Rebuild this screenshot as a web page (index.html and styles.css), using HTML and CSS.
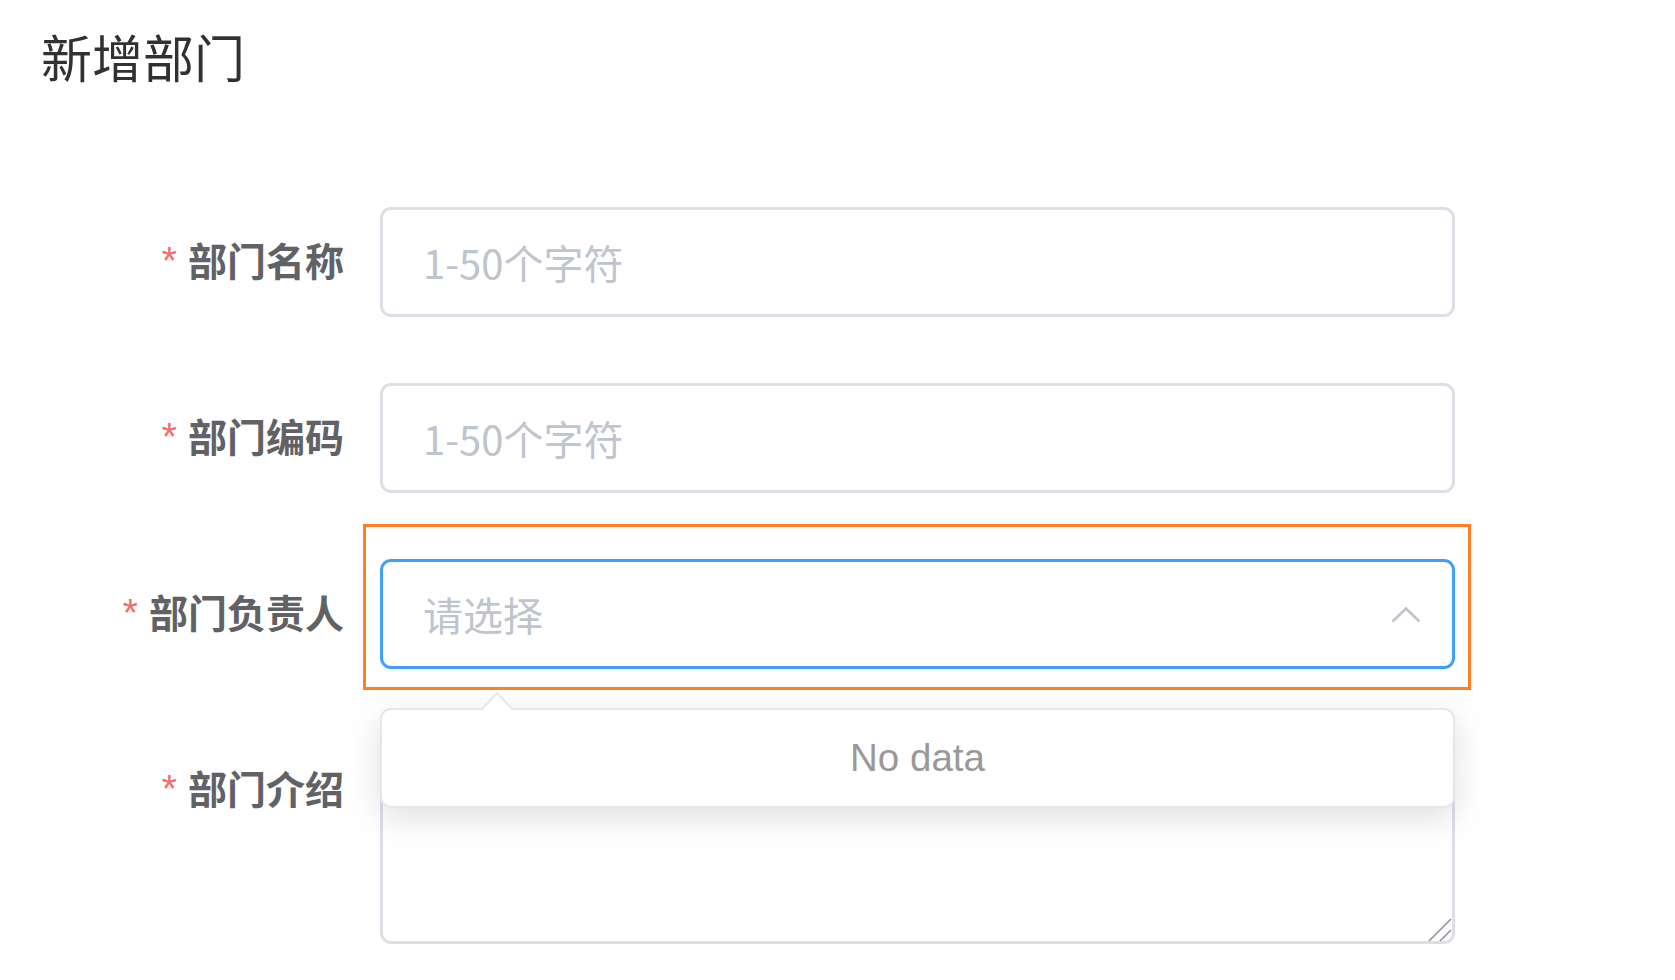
FILE: index.html
```html
<!DOCTYPE html>
<html lang="zh-CN">
<head>
<meta charset="utf-8">
<title>新增部门</title>
<link rel="stylesheet" href="styles.css">
</head>
<body>
<h1 class="title">新增部门</h1>
<form class="form">
  <div class="item">
    <label class="label"><span class="req">*</span>部门名称</label>
    <input class="input" type="text" placeholder="1-50个字符">
  </div>
  <div class="item">
    <label class="label"><span class="req">*</span>部门编码</label>
    <input class="input" type="text" placeholder="1-50个字符">
  </div>
  <div class="item">
    <label class="label"><span class="req">*</span>部门负责人</label>
    <div class="select">
      <input class="input input-focus" type="text" readonly placeholder="请选择">
      <svg class="caret" width="30" height="16" viewBox="0 0 30 16"><polyline points="1.5,14.5 15,1.5 28.5,14.5" fill="none" stroke="#c0c4cc" stroke-width="2.6"/></svg>
      <div class="highlight"></div>
      <div class="dropdown">
        <svg class="dropdown-arrow" width="30" height="22" viewBox="0 0 30 22"><polygon points="0,17 15,1 30,17 30,22 0,22" fill="#fff"/><polyline points="0,17 15,1 30,17" fill="none" stroke="#e4e7ed" stroke-width="2"/></svg>
        <p class="empty">No data</p>
      </div>
    </div>
  </div>
  <div class="item">
    <label class="label"><span class="req">*</span>部门介绍</label>
    <div class="textarea-wrap">
      <textarea class="textarea"></textarea>
      <svg class="grip" width="26" height="26" viewBox="0 0 26 26"><line x1="3" y1="25" x2="25" y2="3" stroke="#8a8a8a" stroke-width="1.5"/><line x1="14" y1="25" x2="25" y2="14" stroke="#8a8a8a" stroke-width="1.5"/></svg>
    </div>
  </div>
</form>
</body>
</html>
```

FILE: styles.css
```css
* {
  box-sizing: border-box;
}

body {
  margin: 0;
  background: #fff;
  font-family: "Noto Sans CJK SC", "Liberation Sans", sans-serif;
}

.title {
  margin: 0;
  padding: 26px 0 0 41px;
  font-size: 51px;
  font-weight: 400;
  line-height: 60px;
  color: #303133;
}

.form {
  margin: 121px 0 0 0;
}

.item {
  display: flex;
  align-items: flex-start;
  margin-bottom: 66px;
}

.label {
  flex: 0 0 380px;
  padding-right: 36px;
  text-align: right;
  font-size: 39px;
  font-weight: 700;
  line-height: 104px;
  color: #606266;
  white-space: nowrap;
}

.req {
  position: relative;
  top: -2px;
  color: #f56c6c;
  margin-right: 11px;
  font-family: "Liberation Sans", sans-serif;
  font-weight: 400;
}

.input {
  flex: 0 0 1075px;
  width: 1075px;
  height: 110px;
  border: 3px solid #dcdfe6;
  border-radius: 11px;
  padding: 0 40px;
  font-family: "Noto Sans CJK SC", "Liberation Sans", sans-serif;
  font-size: 40px;
  color: #606266;
  background: #fff;
  outline: none;
}

.input::placeholder {
  color: #c0c4cc;
}

.input-focus {
  border-color: #409eff;
  padding-right: 90px;
}

.select {
  position: relative;
  flex: 0 0 1075px;
  height: 110px;
}

.caret {
  position: absolute;
  right: 34px;
  top: 48px;
}

.highlight {
  position: absolute;
  left: -17px;
  top: -35px;
  right: -16px;
  bottom: -21px;
  border: 3px solid #ff7f27;
  pointer-events: none;
}

.dropdown {
  position: absolute;
  z-index: 10;
  left: 0;
  right: 0;
  top: 149px;
  height: 100px;
  border: 2px solid #e4e7ed;
  border-radius: 11px;
  background: #fff;
  box-shadow: 0 10px 34px rgba(0, 0, 0, 0.13);
  display: flex;
  align-items: center;
  justify-content: center;
}

.dropdown-arrow {
  position: absolute;
  left: 100px;
  top: -18px;
}

.empty {
  margin: 0;
  font-family: "Liberation Sans", Arial, sans-serif;
  font-size: 38.5px;
  color: #999;
}

.textarea-wrap {
  position: relative;
  flex: 0 0 1075px;
  height: 209px;
}

.textarea {
  display: block;
  width: 100%;
  height: 209px;
  border: 3px solid #dcdfe6;
  border-radius: 11px;
  padding: 14px 40px;
  font-family: "Noto Sans CJK SC", "Liberation Sans", sans-serif;
  font-size: 40px;
  color: #606266;
  resize: none;
  outline: none;
}

.grip {
  position: absolute;
  left: 1046px;
  top: 181px;
}
```
